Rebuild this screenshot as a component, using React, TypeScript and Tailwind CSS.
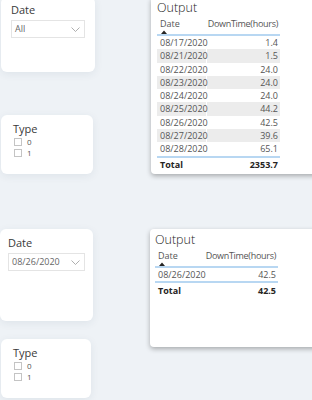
import React from 'react';

const rows: [string, string][] = [
  ['08/17/2020', '1.4'],
  ['08/21/2020', '1.5'],
  ['08/22/2020', '24.0'],
  ['08/23/2020', '24.0'],
  ['08/24/2020', '24.0'],
  ['08/25/2020', '44.2'],
  ['08/26/2020', '42.5'],
  ['08/27/2020', '39.6'],
  ['08/28/2020', '65.1'],
];

const Chevron = () => (
  <svg width="9" height="5" viewBox="0 0 9 5" className="shrink-0">
    <path d="M0.5 0.5 L4.5 4.5 L8.5 0.5" fill="none" stroke="#9a9a9a" strokeWidth="0.8" />
  </svg>
);

const SortArrow = () => (
  <svg width="6" height="4" viewBox="0 0 6 4" className="ml-[1px] mt-[1px]">
    <path d="M0 4 L3 0.5 L6 4 Z" fill="#252423" />
  </svg>
);

const DateSlicer = ({ value, className }: { value: string; className: string }) => (
  <div className={`bg-white rounded-[6px] shadow-[0_2px_8px_rgba(40,60,90,0.08)] ${className}`}>
    <div className="text-[11px] leading-[14px] text-[#3a3a3a]">Date</div>
    <div className="mt-[3px] h-[18px] border border-[#e4e4e4] flex items-center justify-between pl-[3px] pr-[4px]">
      <span className="text-[9px] text-[#666]">{value}</span>
      <Chevron />
    </div>
  </div>
);

const TypeSlicer = ({ className }: { className: string }) => (
  <div className={`bg-white rounded-[6px] shadow-[0_2px_8px_rgba(40,60,90,0.08)] ${className}`}>
    <div className="text-[11px] leading-[14px] text-[#3a3a3a]">Type</div>
    <div className="mt-[1px] flex flex-col gap-[1px]">
      {['0', '1'].map(v => (
        <div key={v} className="flex items-center h-[10px] gap-[5px] pl-[1px]">
          <div className="w-[8px] h-[8px] border border-[#c4c4c4] bg-white" />
          <span className="text-[8px] leading-[10px] text-[#555]">{v}</span>
        </div>
      ))}
    </div>
  </div>
);

const Output = ({ data, total, className }: { data: [string, string][]; total: string; className: string }) => (
  <div className={`bg-white rounded-[4px] shadow-[0_2px_5px_rgba(0,0,0,0.3)] shrink-0 ${className}`}>
    <div className="text-[12.5px] leading-[15px] font-light text-[#252423]">Output</div>
    <div className="w-[123px] text-[9px]">
      <div className="flex justify-between items-start h-[19px] pt-[4px] pl-[3px] pr-[2px] text-[#555]">
        <div className="flex flex-col leading-[10px]">
          <span>Date</span>
          <SortArrow />
        </div>
        <span className="leading-[10px] tracking-[-0.3px]">DownTime(hours)</span>
      </div>
      <div className="h-[2px] bg-[#b8d7f2]" />
      {data.map(([d, v], i) => (
        <div key={d} className={`flex h-[13.3px] items-center text-[#555] ${i % 2 ? 'bg-[#ececec]' : 'bg-white'}`}>
          <span className="w-[50px] pl-[3px] border-r border-white h-full flex items-center">{d}</span>
          <span className="flex-1 text-right pr-[2px]">{v}</span>
        </div>
      ))}
      <div className="h-[2px] bg-[#b8d7f2]" />
      <div className="flex justify-between h-[14px] items-center font-bold text-[#252423] pl-[3px] pr-[2px]">
        <span>Total</span>
        <span>{total}</span>
      </div>
    </div>
  </div>
);

export default function App() {
  return (
    <div className="w-[312px] h-[400px] overflow-hidden bg-[#eef2f6] font-['Open_Sans',sans-serif]">
      <div className="flex items-start -mt-[3px]">
        <div className="flex flex-col w-[94px] ml-[1px] shrink-0">
          <DateSlicer value="All" className="h-[75px] pt-[6px] px-[10px] w-[94px]" />
          <TypeSlicer className="mt-[43px] h-[59px] w-[92px] pt-[7px] px-[12px]" />
        </div>
        <Output data={rows} total="2353.7" className="ml-[56px] w-[170px] h-[177px] pt-[3px] px-[6px]" />
      </div>
      <div className="flex items-start mt-[55px]">
        <div className="flex flex-col w-[93px] shrink-0">
          <DateSlicer value="08/26/2020" className="h-[92px] pt-[7px] px-[8px] w-[93px]" />
          <TypeSlicer className="mt-[18px] ml-[1px] h-[59px] w-[90px] pt-[7px] px-[12px]" />
        </div>
        <Output data={[['08/26/2020', '42.5']]} total="42.5" className="ml-[57px] w-[170px] h-[118px] pt-[3px] px-[5px]" />
      </div>
    </div>
  );
}
